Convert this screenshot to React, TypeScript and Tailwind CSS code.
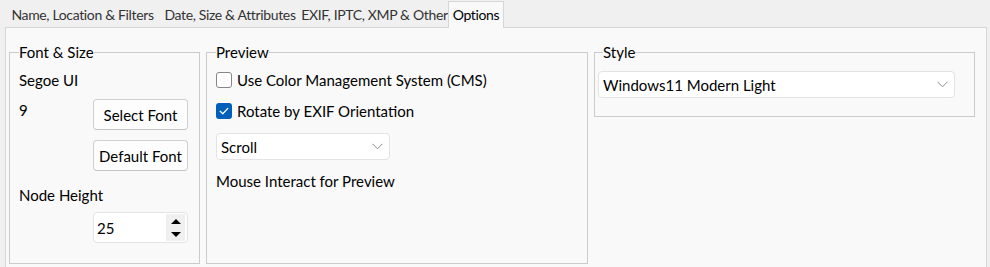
import React from "react";

function Chevron() {
  return (
    <svg width="11" height="7" viewBox="0 0 11 7" className="block">
      <path d="M0.5 0.8 L5.5 5.8 L10.5 0.8" fill="none" stroke="#8c8c8c" strokeWidth="1" />
    </svg>
  );
}

function Combo({ text, w }: { text: string; w: string }) {
  return (
    <div className={`${w} h-[27px] flex items-center justify-between bg-white border border-[#e3e3e3] rounded-[4px] pl-[4px] pr-[6px]`}>
      <span className="leading-5">{text}</span>
      <Chevron />
    </div>
  );
}

function Check({ checked }: { checked: boolean }) {
  if (checked) {
    return (
      <div className="w-4 h-4 rounded-[3px] bg-[#005fb8] flex items-center justify-center">
        <svg width="12" height="12" viewBox="0 0 12 12">
          <path d="M2.2 6.2 L4.8 8.8 L9.8 3.4" fill="none" stroke="white" strokeWidth="1.3" strokeLinecap="round" strokeLinejoin="round" />
        </svg>
      </div>
    );
  }
  return <div className="w-4 h-4 rounded-[3px] bg-white border border-[#858585]" />;
}

function Btn({ text }: { text: string }) {
  return (
    <div className="w-[95px] h-[31px] flex items-center justify-center bg-[#fdfdfd] border border-[#d0d0d0] border-b-[#c4c4c4] rounded-[4px] leading-5 whitespace-nowrap">
      {text}
    </div>
  );
}

export default function App() {
  return (
    <div className="w-[990px] h-[267px] overflow-hidden bg-[#f0f0f0] text-[15px] text-black font-['Lato','Noto_Sans',sans-serif]">
      {/* tabs */}
      <div className="flex h-[27px] pl-[6px] whitespace-nowrap text-[14px] tracking-[-0.35px]">
        <div className="w-[153px] pt-[5px] leading-5 text-center text-[#333333]">Name, Location &amp; Filters</div>
        <div className="w-[142px] pt-[5px] leading-5 text-center text-[#333333]">Date, Size &amp; Attributes</div>
        <div className="w-[147px] pt-[5px] leading-5 text-center text-[#333333]">EXIF, IPTC, XMP &amp; Other</div>
        <div className="relative z-10 mt-px w-[56px] h-[27px] bg-[#f9f9f9] border border-b-0 border-[#d6d6d6] pt-[3px] leading-5 text-center text-black">
          Options
        </div>
      </div>
      {/* page */}
      <div className="ml-[5px] w-[982px] h-[240px] bg-[#f9f9f9] border border-b-0 border-[#d6d6d6] pl-[3px] pt-[14px] flex items-start gap-[6px]">
        {/* Font & Size */}
        <fieldset className="w-[191px] h-[222px] border border-[#cbcbcb] pl-[9px] pr-[11px]">
          <legend className="leading-5">Font &amp; Size</legend>
          <div className="pt-[8px] flex flex-col">
            <div className="leading-5">Segoe UI</div>
            <div className="mt-[9px] flex justify-between items-start">
              <div className="leading-5 mt-px">9</div>
              <Btn text="Select Font" />
            </div>
            <div className="mt-[10px] flex justify-end">
              <Btn text="Default Font" />
            </div>
            <div className="mt-[14px] leading-5">Node Height</div>
            <div className="mt-[7px] flex justify-end">
              <div className="w-[95px] h-[31px] bg-white border border-[#e3e3e3] rounded-[4px] flex items-center justify-between pl-[3px] pr-[2px]">
                <span className="leading-5">25</span>
                <div className="w-[19px] h-[27px] bg-[#f0f0f0] flex flex-col items-center justify-center gap-[8px]">
                  <svg width="10" height="5" viewBox="0 0 10 5" className="block">
                    <polygon points="0,5 10,5 5,0" fill="#000" />
                  </svg>
                  <svg width="10" height="5" viewBox="0 0 10 5" className="block">
                    <polygon points="0,0 10,0 5,5" fill="#000" />
                  </svg>
                </div>
              </div>
            </div>
          </div>
        </fieldset>
        {/* Preview */}
        <fieldset className="w-[382px] h-[222px] border border-[#cbcbcb] px-[9px]">
          <legend className="leading-5">Preview</legend>
          <div className="pt-[8px] flex flex-col items-start">
            <div className="h-5 flex items-center gap-[5px]">
              <Check checked={false} />
              <span className="leading-5">Use Color Management System (CMS)</span>
            </div>
            <div className="mt-[11px] h-5 flex items-center gap-[5px]">
              <Check checked={true} />
              <span className="leading-5">Rotate by EXIF Orientation</span>
            </div>
            <div className="mt-[12px]">
              <Combo text="Scroll" w="w-[174px]" />
            </div>
            <div className="mt-[11px] leading-5">Mouse Interact for Preview</div>
          </div>
        </fieldset>
        {/* Style */}
        <fieldset className="w-[381px] h-[75px] border border-[#cbcbcb] px-[3px]">
          <legend className="leading-5 ml-[5px]">Style</legend>
          <div className="pt-[9px]">
            <Combo text="Windows11 Modern Light" w="w-[357px]" />
          </div>
        </fieldset>
      </div>
    </div>
  );
}
